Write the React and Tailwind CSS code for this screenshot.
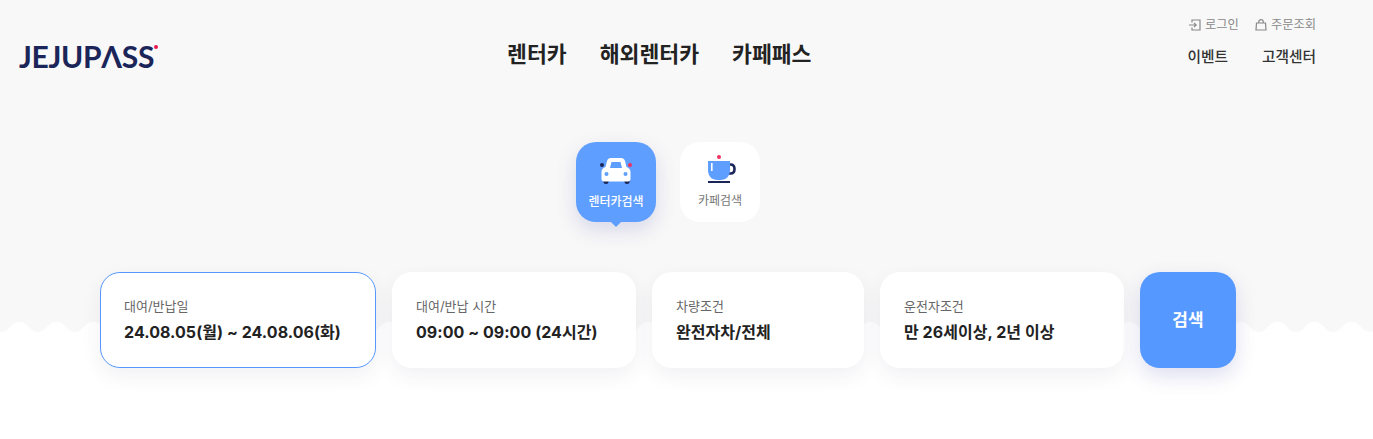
const fontStack = "font-['Inter','Noto_Sans_CJK_KR',sans-serif]";

const searchFields = [
    { label: "대여/반납일", value: "24.08.05(월) ~ 24.08.06(화)", width: "w-[276px]", active: true },
    { label: "대여/반납 시간", value: "09:00 ~ 09:00 (24시간)", width: "w-[244px]" },
    { label: "차량조건", value: "완전자차/전체", width: "w-[212px]" },
    { label: "운전자조건", value: "만 26세이상, 2년 이상", width: "w-[244px]" },
];

function LoginIcon() {
    return (
        <svg width="12" height="12" viewBox="0 0 12 12" fill="none" stroke="currentColor" strokeWidth="1.2" className="block">
            <path d="M3 3.5 V1 H11 V11 H3 V8.5" />
            <path d="M0 6 H7 M5 3.8 L7.2 6 L5 8.2" />
        </svg>
    );
}

function BagIcon() {
    return (
        <svg width="12" height="12" viewBox="0 0 12 12" fill="none" stroke="currentColor" strokeWidth="1.2" className="block">
            <path d="M1.5 4 H10.5 L11 11 H1 Z" />
            <path d="M3.8 4 V2.6 C3.8 1.4 4.8 0.7 6 0.7 C7.2 0.7 8.2 1.4 8.2 2.6 V4" />
        </svg>
    );
}

function CarIcon() {
    return (
        <svg width="34" height="28" viewBox="0 0 34 28" className="block">
            <circle cx="3" cy="8" r="2" fill="#1b2559" />
            <circle cx="31" cy="8" r="2" fill="#f0305f" />
            <rect x="4.5" y="22" width="5" height="5" rx="2.5" fill="#1b2559" />
            <rect x="25.5" y="22" width="5" height="5" rx="2.5" fill="#1b2559" />
            <path d="M8 4 C8.5 2 10 1 12 1 H22 C24 1 25.5 2 26 4 L27.5 10 C30 11 31.5 12.5 31.5 15 V22 C31.5 23.5 30.5 24.5 29 24.5 H5 C3.5 24.5 2.5 23.5 2.5 22 V15 C2.5 12.5 4 11 6.5 10 Z" fill="#fff" />
            <path d="M11 11 L12.5 5 H21.5 L23 11 Z" fill="#5e9eff" />
            <circle cx="7.5" cy="17" r="2" fill="#5e9eff" />
            <circle cx="26.5" cy="17" r="2" fill="#5e9eff" />
        </svg>
    );
}

function CupIcon() {
    return (
        <svg width="28" height="28" viewBox="0 0 28 28" className="ml-[4px] block">
            <circle cx="11" cy="2" r="2" fill="#f0305f" />
            <path d="M21 9.5 H22.5 C25.5 9.5 26.5 12 26.5 14 C26.5 16 25.5 18.5 22.5 18.5 H20" fill="none" stroke="#1b2559" strokeWidth="2.6" />
            <path d="M0 6 H22 V15 C22 21 18.5 25 12.5 25 H9.5 C3.5 25 0 21 0 15 Z" fill="#5e9eff" />
            <rect x="3" y="8" width="1.6" height="8" fill="#fff" />
            <rect x="0" y="26" width="22" height="2" fill="#1b2559" />
        </svg>
    );
}

export default function App() {
    return (
        <div className={`relative min-h-[439px] overflow-hidden bg-white ${fontStack}`}>
            {/* 회색 배경 + 물결 */}
            <div className="absolute inset-x-0 top-0 h-[332px] bg-[#f8f8f8]" />
            <svg className="absolute left-0 top-[322px]" width="1373" height="11">
                <defs>
                    <pattern id="wave" x="1" y="0" width="37" height="11" patternUnits="userSpaceOnUse">
                        <path d="M0 10 C9 10 9 0 18.5 0 C28 0 28 10 37 10 V11 H0 Z" fill="#fff" />
                    </pattern>
                </defs>
                <rect width="1373" height="11" fill="url(#wave)" />
            </svg>

            <div className="relative w-[1336px]">
                {/* 헤더 */}
                <header className="relative flex h-[142px] items-start justify-between pl-[19px] pr-[20px]">
                    <a className="mt-[39px] flex items-start font-['Lato',sans-serif] text-[30px] font-bold leading-[34px] tracking-[-0.3px] text-[#1b2559]">
                        JEJUPΛSS
                        <span className="mt-[6px] size-[4px] rounded-full bg-[#e8194f]" />
                    </a>

                    <nav className="ml-[-27px] mt-[39px] flex gap-[33px] text-[21.6px] font-bold leading-[30px] text-[#222]">
                        <span>렌터카</span>
                        <span>해외렌터카</span>
                        <span>카페패스</span>
                    </nav>

                    <div className="flex flex-col items-end">
                        <div className="mt-[16px] flex gap-[16px] text-[12.25px] leading-[18px] text-[#888]">
                            <span className="flex items-center gap-[4px]">
                                <LoginIcon />
                                로그인
                            </span>
                            <span className="flex items-center gap-[4px]">
                                <BagIcon />
                                주문조회
                            </span>
                        </div>
                        <div className="mt-[13px] flex gap-[34px] text-[14.7px] font-medium leading-[21px] text-[#333]">
                            <span>이벤트</span>
                            <span>고객센터</span>
                        </div>
                    </div>
                </header>

                {/* 검색 탭 */}
                <div className="flex justify-center gap-[24px]">
                    <button className="relative flex size-[80px] flex-col items-center rounded-[20px] bg-[#5e9eff] pt-[15px] text-[12px] font-medium leading-[18px] text-white shadow-[0_8px_20px_rgba(90,90,180,0.2)]">
                        <CarIcon />
                        <span className="mt-[8px]">렌터카검색</span>
                        <span className="absolute -bottom-[5px] left-1/2 size-0 -translate-x-1/2 border-x-[5px] border-t-[5px] border-x-transparent border-t-[#5e9eff]" />
                    </button>
                    <button className="flex size-[80px] flex-col items-center rounded-[20px] bg-white pt-[13px] text-[12px] leading-[18px] text-[#777]">
                        <CupIcon />
                        <span className="mt-[9px]">카페검색</span>
                    </button>
                </div>

                {/* 검색 조건 */}
                <div className="mt-[50px] flex justify-center gap-[16px]">
                    {searchFields.map((field) => (
                        <div
                            key={field.label}
                            className={`${field.width} h-[96px] rounded-[20px] bg-white shadow-[0_8px_20px_rgba(60,60,100,0.07)] ${field.active ? "border border-[#5598ff] px-[23px] pt-[23px]" : "px-[24px] pt-[24px]"}`}
                        >
                            <p className="text-[13px] leading-[20px] text-[#666]">{field.label}</p>
                            <p className="mt-[3px] whitespace-nowrap text-[16px] font-bold leading-[26px] tracking-[0.05px] text-[#222]">{field.value}</p>
                        </div>
                    ))}
                    <button className="h-[96px] w-[96px] rounded-[20px] bg-[#5598ff] pt-[2px] text-[17px] font-bold text-white shadow-[0_8px_20px_rgba(90,90,180,0.2)]">
                        검색
                    </button>
                </div>
            </div>
        </div>
    );
}
